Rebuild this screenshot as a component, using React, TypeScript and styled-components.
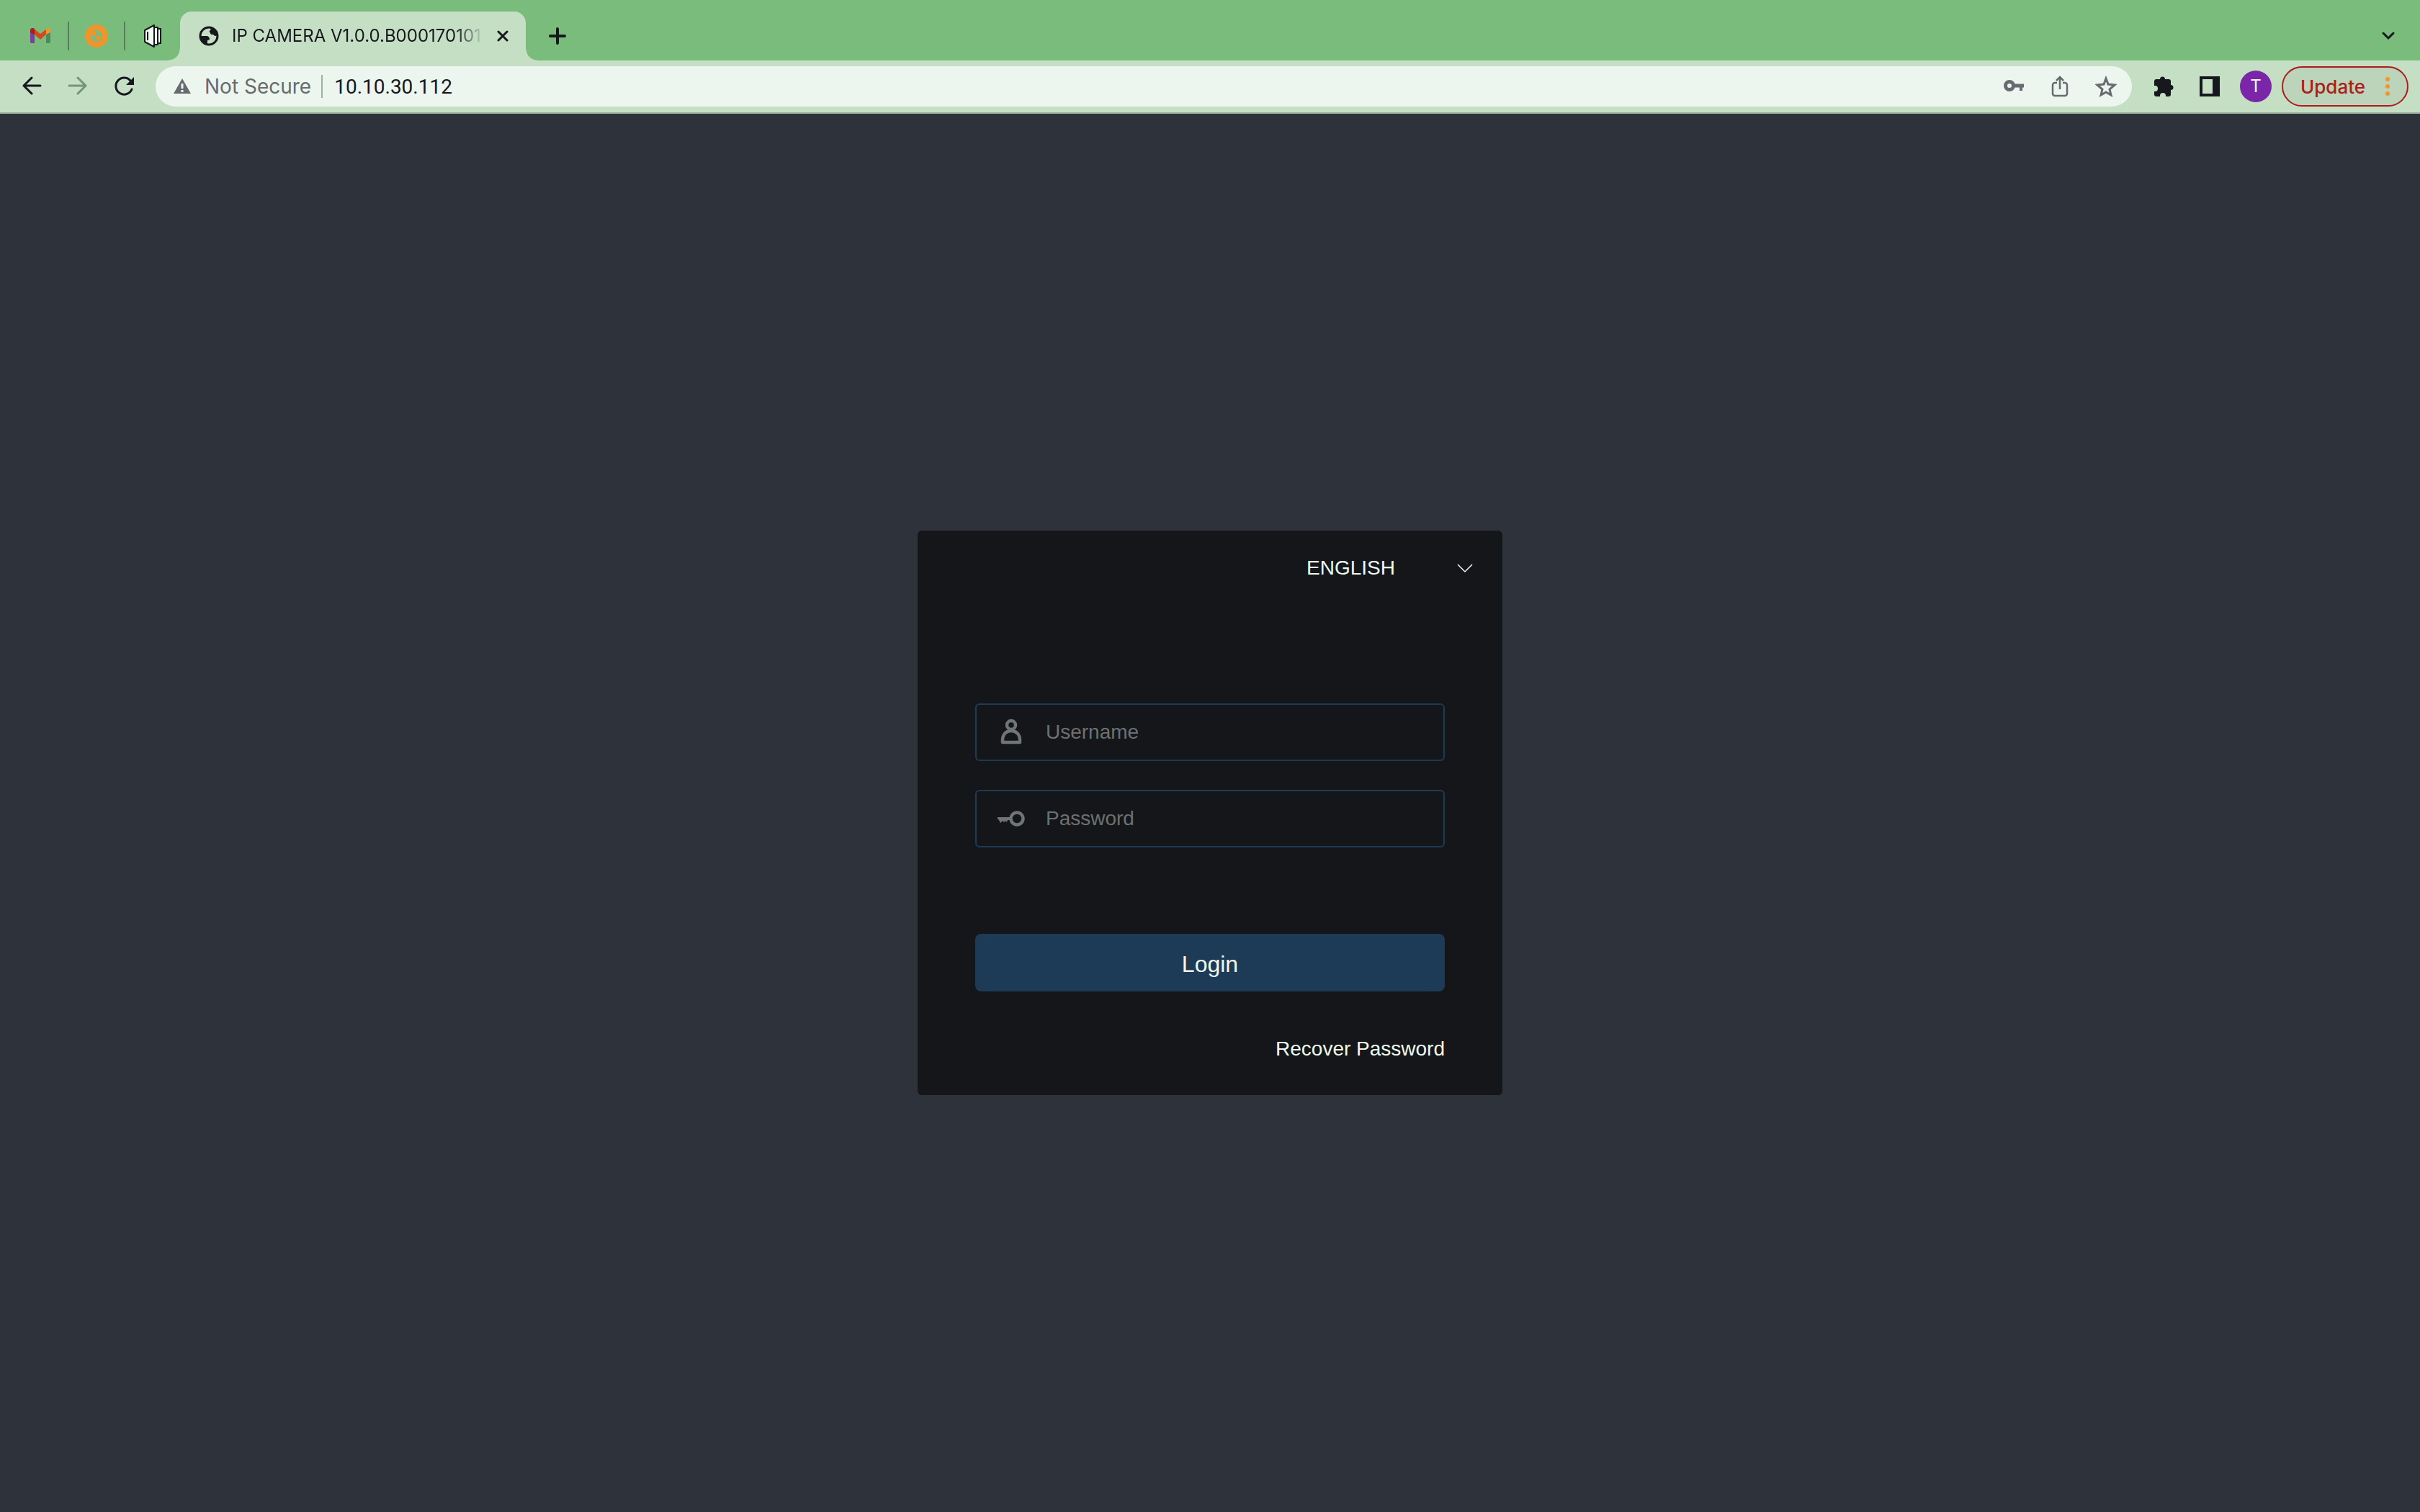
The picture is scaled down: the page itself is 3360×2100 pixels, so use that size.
import React from "react";
import styled, { createGlobalStyle } from "styled-components";

const color = {
  strip: "#7abc7c",
  bar: "#c5dfc4",
  barEdge: "#9eb09e",
  omnibox: "#edf6ee",
  ink: "#17181d",
  muted: "#666b70",
  placeholder: "#6b7173",
  page: "#2e323a",
  card: "#151619",
  blue: "#1d3a56",
  light: "#f0f9ee",
  red: "#ad1b1b",
  orange: "#ee962c",
};

const uiFont = `Inter, Roboto, "Noto Sans", sans-serif`;
const addressFont = `Roboto, "Noto Sans", sans-serif`;
const pageFont = `"Liberation Sans", Arial, sans-serif`;

const GlobalStyle = createGlobalStyle`
  *, *::before, *::after { box-sizing: border-box; }
  body { margin: 0; background: ${color.page}; }
  button, input, select { font: inherit; color: inherit; margin: 0; padding: 0; border: 0; background: none; outline: none; }
  svg { display: block; flex: none; }
`;

const Window = styled.div`
  display: flex;
  flex-direction: column;
  min-height: 100vh;
  font-family: ${uiFont};
  color: ${color.ink};
`;

const TabStrip = styled.nav`
  display: flex;
  align-items: center;
  padding: 16px 34px 0 18px;
  height: 84px;
  background: ${color.strip};
`;

const PinnedTab = styled.button`
  display: flex;
  align-items: center;
  justify-content: center;
  width: 76px;
  height: 68px;
`;

const TabDivider = styled.span`
  width: 2px;
  height: 40px;
  background: #5f7866;
`;

const ActiveTab = styled.div`
  position: relative;
  display: flex;
  align-items: center;
  gap: 18px;
  width: 480px;
  height: 68px;
  padding: 0 24px 0 26px;
  border-radius: 16px 16px 0 0;
  background: ${color.bar};

  &::before,
  &::after {
    content: "";
    position: absolute;
    bottom: 0;
    width: 16px;
    height: 16px;
  }
  &::before {
    right: 100%;
    background: radial-gradient(circle at 0 0, transparent 15px, ${color.bar} 16px);
  }
  &::after {
    left: 100%;
    background: radial-gradient(circle at 100% 0, transparent 15px, ${color.bar} 16px);
  }
`;

const TabTitle = styled.span`
  flex: 1;
  min-width: 0;
  overflow: hidden;
  white-space: nowrap;
  font-size: 24px;
  line-height: 32px;
  mask-image: linear-gradient(to right, #000 calc(100% - 40px), transparent);
`;

const IconButton = styled.button<{ $push?: boolean }>`
  display: flex;
  align-items: center;
  justify-content: center;
  ${(p) => p.$push && "margin-left: auto;"}
`;

const NewTabButton = styled(IconButton)`
  margin-left: 32px;
`;

const Toolbar = styled.header`
  display: flex;
  align-items: center;
  height: 74px;
  padding: 0 16px 0 12px;
  background: ${color.bar};
  border-bottom: 2px solid ${color.barEdge};
`;

const ToolButton = styled.button`
  display: flex;
  align-items: center;
  justify-content: center;
  flex: none;
  width: 64px;
  height: 56px;
`;

const Omnibox = styled.div`
  display: flex;
  align-items: center;
  flex: 1;
  min-width: 0;
  height: 56px;
  margin: 0 12px;
  padding: 0 4px 0 24px;
  border-radius: 28px;
  background: ${color.omnibox};
  font-size: 28px;
`;

const SiteInfo = styled.button`
  display: flex;
  align-items: center;
  gap: 18px;
  padding-right: 14px;
  color: ${color.muted};
  white-space: nowrap;
`;

const OmniDivider = styled.span`
  width: 2px;
  height: 32px;
  background: ${color.barEdge};
`;

const AddressInput = styled.input`
  flex: 1;
  min-width: 0;
  height: 40px;
  padding-left: 16px;
  font-family: ${addressFont};
`;

const Avatar = styled.span`
  display: flex;
  align-items: center;
  justify-content: center;
  width: 44px;
  height: 44px;
  border-radius: 50%;
  background: #7b26a8;
  color: ${color.light};
  font: 24px/44px ${uiFont};
`;

const UpdateButton = styled.button`
  display: flex;
  align-items: center;
  justify-content: space-between;
  width: 176px;
  height: 56px;
  margin-left: 4px;
  padding: 0 24px;
  border: 2px solid ${color.red};
  border-radius: 28px;
  background: #bcd4b9;
  color: ${color.red};
  font-size: 26px;
  font-weight: 500;
`;

const Page = styled.main`
  flex: 1;
  display: flex;
  align-items: center;
  justify-content: center;
  background: ${color.page};
  font-family: ${pageFont};
  font-size: 28px;
  color: ${color.light};
`;

const LoginCard = styled.form`
  display: flex;
  flex-direction: column;
  width: 100%;
  max-width: 812px;
  padding: 0 80px 44px;
  border-radius: 6px;
  background: ${color.card};
`;

const CardHeader = styled.div`
  display: flex;
  justify-content: flex-end;
  align-items: center;
  height: 102px;
  margin: 0 -48px 138px 0;
`;

const LanguagePicker = styled.div`
  position: relative;
  width: 240px;

  svg {
    position: absolute;
    right: 8px;
    top: 22px;
    pointer-events: none;
  }
`;

const LanguageSelect = styled.select`
  appearance: none;
  width: 100%;
  height: 56px;

  option {
    color: ${color.ink};
  }
`;

const Fields = styled.div`
  display: flex;
  flex-direction: column;
  gap: 40px;
`;

const Field = styled.label`
  display: flex;
  align-items: center;
  gap: 28px;
  height: 80px;
  padding: 0 28px;
  border: 2px solid ${color.blue};
  border-radius: 6px;
`;

const FieldInput = styled.input`
  flex: 1;
  min-width: 0;
  height: 40px;

  &::placeholder {
    color: ${color.placeholder};
    opacity: 1;
  }
`;

const LoginButton = styled.button`
  height: 80px;
  margin-top: 120px;
  padding-top: 4px;
  border-radius: 8px;
  background: ${color.blue};
  font-size: 32px;
`;

const RecoverLink = styled.a`
  align-self: flex-end;
  margin-top: 60px;
  line-height: 40px;
  color: inherit;
  text-decoration: none;
`;

const GmailIcon = () => (
  <svg width="28" height="22" viewBox="0 0 28 22">
    <path d="M0 5h6v16H2a2 2 0 0 1-2-2z" fill="#7a3fa0" />
    <path d="M22 5h6v14a2 2 0 0 1-2 2h-4z" fill="#4a8a60" />
    <path d="M5 1l9 7 9-7v7l-9 8-9-8z" fill="#cf4a20" />
    <path d="M0 3C0 0 3-1 6 1v8L0 6z" fill="#ad1b1b" />
    <path d="M28 3c0-3-3-4-6-2v8l6-3z" fill={color.orange} />
  </svg>
);

const OrangeIcon = () => (
  <svg width="32" height="32" viewBox="0 0 32 32">
    <circle cx="16" cy="16" r="12" fill="none" stroke={color.orange} strokeWidth="8" />
    <path d="M10 11l5-2v7h-5zM16 16h6v3l-3 3h-3z" fill={color.orange} />
  </svg>
);

const PanelsIcon = () => (
  <svg width="24" height="32" viewBox="0 0 24 32" fill={color.light} stroke={color.ink} strokeWidth="2">
    <path d="M17 6h6v20h-6z" />
    <path d="M13 4h6v24h-6z" />
    <path d="M1 8l13-7v30L1 24z" strokeLinejoin="round" />
    <path d="M5 10v12" />
  </svg>
);

const GlobeIcon = () => (
  <svg width="28" height="28" viewBox="0 0 28 28">
    <circle cx="14" cy="14" r="12" fill="none" stroke={color.ink} strokeWidth="3" />
    <path
      d="M17 2c-1 2 0 3-1 4-2 1-1 2 0 4 0 2 2 2 4 2 1 0 1 2 3 2l4-1C26 7 23 3 17 2zM2 14h9c2 0 4 2 4 4 0 1-1 2-3 2v3c0 1-1 2-2 3C5 24 2 20 2 14z"
      fill={color.ink}
    />
  </svg>
);

const CloseIcon = () => (
  <svg width="16" height="16" viewBox="0 0 16 16" stroke={color.ink} strokeWidth="3" strokeLinecap="round">
    <path d="M2 2l12 12M14 2L2 14" />
  </svg>
);

const PlusIcon = () => (
  <svg width="24" height="24" viewBox="0 0 24 24" stroke={color.ink} strokeWidth="4" strokeLinecap="round">
    <path d="M12 2v20M2 12h20" />
  </svg>
);

const TabSearchIcon = () => (
  <svg width="20" height="12" viewBox="0 0 20 12" fill="none" stroke={color.ink} strokeWidth="3" strokeLinecap="round">
    <path d="M3 2l7 7 7-7" />
  </svg>
);

const ArrowIcon = ({ forward }: { forward?: boolean }) => (
  <svg
    width="28"
    height="28"
    viewBox="0 0 28 28"
    fill="none"
    stroke={forward ? "#74957a" : color.ink}
    strokeWidth="3"
    strokeLinecap="round"
  >
    <path d={forward ? "M2 13h23M14 2l11 11-11 11" : "M26 13H3M14 2L3 13l11 11"} />
  </svg>
);

const ReloadIcon = () => (
  <svg width="28" height="28" viewBox="0 0 28 28" fill="none">
    <path d="M25 18A11.5 11.5 0 1 1 23 6" stroke={color.ink} strokeWidth="3" strokeLinecap="round" />
    <path d="M28 1v11H17z" fill={color.ink} />
  </svg>
);

const WarningIcon = () => (
  <svg width="26" height="24" viewBox="0 0 26 24">
    <path d="M13 1l12 21H1z" fill={color.muted} />
    <path d="M13 8v7M13 17v3" stroke={color.omnibox} strokeWidth="3" />
  </svg>
);

const SolidKeyIcon = () => (
  <svg width="28" height="18" viewBox="0 0 28 18" fill="none" stroke={color.muted}>
    <circle cx="8" cy="8" r="5.5" strokeWidth="5" />
    <path d="M14 8h14" strokeWidth="5" />
    <path d="M24 9v6" strokeWidth="4" />
  </svg>
);

const ShareIcon = () => (
  <svg width="24" height="30" viewBox="0 0 24 30" fill="none" stroke={color.muted} strokeWidth="2.5">
    <path d="M8 10H5a3 3 0 0 0-3 3v12a3 3 0 0 0 3 3h14a3 3 0 0 0 3-3V13a3 3 0 0 0-3-3h-3" />
    <path d="M12 19V3M7 7l5-5 5 5" />
  </svg>
);

const StarIcon = () => (
  <svg width="30" height="30" viewBox="0 0 30 30" fill="none" stroke={color.muted} strokeWidth="3">
    <path d="M15 4l3 8 9 1-7 6 2 8-7-4-7 4 2-8-7-6 9-1z" />
  </svg>
);

const PuzzleIcon = () => (
  <svg width="30" height="30" viewBox="-1 0 30 30" fill={color.ink}>
    <path d="M4 5h5a3.5 3.5 0 1 1 7 0h5a3 3 0 0 1 3 3v5a3.5 3.5 0 1 1 0 7v6a3 3 0 0 1-3 3h-4v-1a4 4 0 0 0-8 0v1H4a3 3 0 0 1-3-3v-4h1a4 4 0 0 0 0-8H1V8a3 3 0 0 1 3-3z" />
  </svg>
);

const SidePanelIcon = () => (
  <svg width="28" height="28" viewBox="0 0 28 28">
    <path d="M0 0h28v28H0zM4 4v20h14V4z" fillRule="evenodd" fill={color.ink} />
  </svg>
);

const DotsIcon = () => (
  <svg width="6" height="26" viewBox="0 0 6 26" fill={color.orange}>
    <circle cx="3" cy="3" r="3" />
    <circle cx="3" cy="13" r="3" />
    <circle cx="3" cy="23" r="3" />
  </svg>
);

const LanguageChevron = () => (
  <svg width="24" height="14" viewBox="0 0 24 14" fill="none" stroke={color.light} strokeWidth="1.5">
    <path d="M2 2l10 10L22 2" />
  </svg>
);

const UserIcon = () => (
  <svg width="40" height="40" viewBox="0 0 40 40" fill="none" stroke="#6f7475" strokeWidth="4.5">
    <circle cx="20" cy="10" r="6" />
    <path d="M8 34v-3c0-8 5-13 12-13s12 5 12 13v3z" strokeLinejoin="round" />
  </svg>
);

const KeyIcon = () => (
  <svg width="40" height="24" viewBox="0 0 40 24">
    <circle cx="28" cy="12" r="8.5" fill="none" stroke="#6f7475" strokeWidth="4.5" />
    <path d="M1 10h19v4h-5l-1 3-2-2-2 2-2-2-3 3-2-4-2-2z" fill="#6f7475" />
  </svg>
);

export default function App() {
  return (
    <Window>
      <GlobalStyle />
      <TabStrip aria-label="Tabs">
        <PinnedTab aria-label="Gmail"><GmailIcon /></PinnedTab>
        <TabDivider />
        <PinnedTab aria-label="Pinned tab 2"><OrangeIcon /></PinnedTab>
        <TabDivider />
        <PinnedTab aria-label="Pinned tab 3"><PanelsIcon /></PinnedTab>
        <ActiveTab>
          <GlobeIcon />
          <TabTitle>IP CAMERA V1.0.0.B000170101</TabTitle>
          <IconButton aria-label="Close tab"><CloseIcon /></IconButton>
        </ActiveTab>
        <NewTabButton aria-label="New tab"><PlusIcon /></NewTabButton>
        <IconButton $push aria-label="Search tabs"><TabSearchIcon /></IconButton>
      </TabStrip>

      <Toolbar>
        <ToolButton aria-label="Back"><ArrowIcon /></ToolButton>
        <ToolButton aria-label="Forward"><ArrowIcon forward /></ToolButton>
        <ToolButton aria-label="Reload"><ReloadIcon /></ToolButton>
        <Omnibox>
          <SiteInfo><WarningIcon />Not Secure</SiteInfo>
          <OmniDivider />
          <AddressInput aria-label="Address" defaultValue="10.10.30.112" />
          <ToolButton aria-label="Passwords"><SolidKeyIcon /></ToolButton>
          <ToolButton aria-label="Share"><ShareIcon /></ToolButton>
          <ToolButton aria-label="Bookmark"><StarIcon /></ToolButton>
        </Omnibox>
        <ToolButton aria-label="Extensions"><PuzzleIcon /></ToolButton>
        <ToolButton aria-label="Side panel"><SidePanelIcon /></ToolButton>
        <ToolButton aria-label="Profile"><Avatar>T</Avatar></ToolButton>
        <UpdateButton>Update<DotsIcon /></UpdateButton>
      </Toolbar>

      <Page>
        <LoginCard onSubmit={(e: React.FormEvent) => e.preventDefault()}>
          <CardHeader>
            <LanguagePicker>
              <LanguageSelect aria-label="Language" defaultValue="en">
                <option value="en">ENGLISH</option>
              </LanguageSelect>
              <LanguageChevron />
            </LanguagePicker>
          </CardHeader>
          <Fields>
            <Field>
              <UserIcon />
              <FieldInput type="text" aria-label="Username" placeholder="Username" />
            </Field>
            <Field>
              <KeyIcon />
              <FieldInput type="password" aria-label="Password" placeholder="Password" />
            </Field>
          </Fields>
          <LoginButton type="submit">Login</LoginButton>
          <RecoverLink href="#recover">Recover Password</RecoverLink>
        </LoginCard>
      </Page>
    </Window>
  );
}
